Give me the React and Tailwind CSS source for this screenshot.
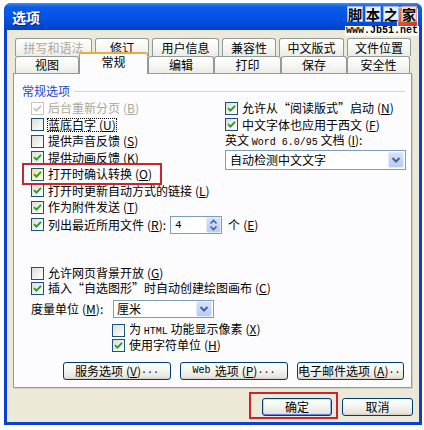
import React from "react";

function Check({ checked, disabled, hover }) {
  const cls = disabled
    ? "border-[#CAC8BB] bg-white"
    : hover
    ? "border-[#1C5180] bg-[linear-gradient(135deg,#EFE39A,#FFFBE2)]"
    : "border-[#1C5180] bg-[linear-gradient(135deg,#DCDCD7,#FFFFFF)]";
  return (
    <span className={"w-[13px] h-[13px] border flex items-center justify-center shrink-0 " + cls}>
      {checked && (
        <svg width="9" height="9" viewBox="0 0 9 9">
          <path d="M1 4.2 L3.4 6.6 L8 1.8" fill="none" stroke={disabled ? "#C8C6B8" : "#21A121"} strokeWidth="1.9" />
        </svg>
      )}
    </span>
  );
}

function K({ k }) {
  return (
    <span className="ml-[3px]">
      (<span className="underline underline-offset-[1px]">{k}</span>)
    </span>
  );
}

function Row({ checked, disabled, hover, className, children }) {
  return (
    <div className={"flex items-center gap-[4px] " + (className || "")}>
      <Check checked={checked} disabled={disabled} hover={hover} />
      <span className={"whitespace-nowrap leading-[14px] " + (disabled ? "text-[#ACA899]" : "")}>{children}</span>
    </div>
  );
}

function DropArrow() {
  return (
    <span className="w-[16px] h-[16px] mr-[1px] rounded-[2px] border border-[#E2EBFE] bg-[linear-gradient(#D4E2FD,#B7CBF6)] flex items-center justify-center shrink-0">
      <svg width="10" height="8" viewBox="0 0 10 8">
        <path d="M1.5 2 L5 5.5 L8.5 2" fill="none" stroke="#4D6185" strokeWidth="2" />
      </svg>
    </span>
  );
}

function Btn({ className, children, def }) {
  return (
    <div
      className={
        "h-[18px] rounded-[3px] border border-[#003C74] bg-[linear-gradient(#FFFFFF,#F4F4F0_45%,#E8E6DD_85%,#D6D0C5)] flex items-center whitespace-nowrap overflow-hidden leading-[14px] " +
        (def ? "shadow-[inset_0_1px_0_#CEE7FF,inset_0_-1px_0_#6982EE,inset_1px_0_0_#B8D2F6,inset_-1px_0_0_#97AEF0] " : "") +
        className
      }
    >
      {children}
    </div>
  );
}

const tab1 =
  "h-[18px] border border-b-0 border-[#919B9C] rounded-t-[3px] bg-[linear-gradient(#FFFFFF,#F5F5F1_60%,#ECEBE6)] flex items-center justify-center leading-[14px]";
const tab2 =
  "h-[17px] border border-b-0 border-[#919B9C] rounded-t-[3px] bg-[linear-gradient(#FFFFFF,#F5F5F1_60%,#ECEBE6)] flex items-center justify-center leading-[14px]";

export default function App() {
  return (
    <div className="w-[424px] h-[430px] bg-white relative overflow-hidden font-['Noto_Sans_CJK_SC',sans-serif] text-[12px] text-black">
      {/* window */}
      <div className="ml-[4px] mt-[3px] w-[418px] h-[422px] flex flex-col rounded-t-[7px] bg-[#0B3FCF]">
        {/* title bar */}
        <div className="h-[27px] rounded-t-[7px] bg-[linear-gradient(#3C8CF6,#0D5DE8_14%,#0454E6_50%,#0148D6_85%,#0040C2)] flex items-center justify-between pl-[8px] pr-[4px]">
          <span className="text-white font-bold text-[14px] leading-[16px] [text-shadow:1px_1px_0_#0F1F7A]">选项</span>
          <div className="w-[21px] h-[21px] rounded-[3px] border border-white bg-[linear-gradient(135deg,#EC8A6A,#D9512F_50%,#C23A1B)] flex items-center justify-center mt-[1px]">
            <svg width="11" height="11" viewBox="0 0 11 11">
              <path d="M1.5 1.5 L9.5 9.5 M9.5 1.5 L1.5 9.5" stroke="white" strokeWidth="2" />
            </svg>
          </div>
        </div>
        {/* body */}
        <div className="flex-1 mx-[3px] mb-[3px] bg-[#ECE9D8] flex flex-col pt-[8px]">
          {/* tabs */}
          <div className="h-[35px] flex flex-col">
            <div className="flex gap-[3px] pl-[8px]">
              <div className={tab1 + " w-[77px] text-[#ACA899]"}>拼写和语法</div>
              <div className={tab1 + " w-[54px]"}>修订</div>
              <div className={tab1 + " w-[67px]"}>用户信息</div>
              <div className={tab1 + " w-[54px]"}>兼容性</div>
              <div className={tab1 + " w-[65px]"}>中文版式</div>
              <div className={tab1 + " w-[64px]"}>文件位置</div>
            </div>
            <div className="flex items-end h-[17px] pl-[8px]">
              <div className={tab2 + " w-[64px]"}>视图</div>
              <div className="relative z-10 w-[69px] h-[22px] -mb-[1px] border border-b-0 border-[#919B9C] border-t-2 border-t-[#F1A93C] rounded-t-[3px] bg-[#FCFCFE] flex items-start justify-center pt-[1px] leading-[14px]">
                常规
              </div>
              <div className={tab2 + " w-[66px]"}>编辑</div>
              <div className={tab2 + " w-[67px]"}>打印</div>
              <div className={tab2 + " w-[66px]"}>保存</div>
              <div className={tab2 + " w-[63px]"}>安全性</div>
            </div>
          </div>

          {/* panel */}
          <div className="ml-[6px] mr-[7px] h-[315px] border border-[#919B9C] bg-[#FCFCFE] shadow-[1px_1px_0_#D2D0C2] flex flex-col pt-[10px]">
            <div className="flex items-center h-[14px] pl-[8px]">
              <span className="text-[#1E48D0] leading-[14px]">常规选项</span>
              <div className="flex-1 h-px bg-[#D5D5C8] ml-[4px] mr-[6px]" />
            </div>

            <div className="flex mt-[2px]">
              <div className="w-[211px] pl-[17px] flex flex-col">
                <Row checked disabled className="h-[16.5px]">
                  后台重新分页<K k="B" />
                </Row>
                <div className="flex items-center gap-[4px] h-[16.5px]">
                  <Check />
                  <span className="whitespace-nowrap leading-[12px] outline-1 outline-dotted outline-black outline-offset-[-1px] px-[1px] py-[1px] -ml-[1px]">
                    蓝底白字<K k="U" />
                  </span>
                </div>
                <Row className="h-[16.5px]">
                  提供声音反馈<K k="S" />
                </Row>
                <Row checked className="h-[16.5px]">
                  提供动画反馈<K k="K" />
                </Row>
                <div className="relative h-[16.5px] flex items-center">
                  <Row checked hover className="h-[16.5px]">
                    打开时确认转换<K k="O" />
                  </Row>
                  <div className="absolute -left-[9px] -top-[3px] w-[140px] h-[22px] border-2 border-[#C8262C]" />
                </div>
                <Row checked className="h-[16.5px]">
                  打开时更新自动方式的链接<K k="L" />
                </Row>
                <Row checked className="h-[16.5px]">
                  作为附件发送<K k="T" />
                </Row>
              </div>
              <div className="flex flex-col">
                <Row checked className="h-[16.5px]">
                  允许从“阅读版式”启动<K k="N" />
                </Row>
                <Row checked className="h-[16.5px]">
                  中文字体也应用于西文<K k="F" />
                </Row>
                <div className="h-[14px] leading-[14px] whitespace-nowrap">
                  英文 <span className="font-['Liberation_Mono',monospace] text-[10px]">Word 6.0/95</span> 文档<K k="I" />:
                </div>
                <div className="mt-[3px] w-[181px] h-[20px] border border-[#7F9DB9] bg-white flex items-center justify-between">
                  <span className="pl-[4px] leading-[14px]">自动检测中文文字</span>
                  <DropArrow />
                </div>
              </div>
            </div>

            <div className="flex items-center h-[18px] pl-[17px]">
              <Check checked />
              <span className="ml-[4px] whitespace-nowrap leading-[14px]">
                列出最近所用文件<K k="R" />:
              </span>
              <div className="ml-[4px] w-[52px] h-[18px] border border-[#7F9DB9] bg-white flex items-center">
                <span className="flex-1 pl-[4px] font-['Liberation_Mono',monospace] text-[11px] leading-[14px]">4</span>
                <span className="w-[15px] h-[16px] rounded-[2px] border border-[#E2EBFE] bg-[linear-gradient(#D4E2FD,#B7CBF6)] flex items-center justify-center">
                  <svg width="9" height="12" viewBox="0 0 9 12">
                    <path d="M1.5 4.5 L4.5 1.5 L7.5 4.5 M1.5 7.5 L4.5 10.5 L7.5 7.5" fill="none" stroke="#4D6185" strokeWidth="1.6" />
                  </svg>
                </span>
              </div>
              <span className="ml-[6px] whitespace-nowrap leading-[14px]">
                个<K k="E" />
              </span>
            </div>

            <Row className="h-[15px] pl-[17px] mt-[32px]">
              允许网页背景开放<K k="G" />
            </Row>
            <Row checked className="h-[15px] pl-[17px]">
              插入“自选图形”时自动创建绘图画布<K k="C" />
            </Row>
            <div className="flex items-center h-[18px] pl-[17px] mt-[4.5px]">
              <span className="w-[82px] whitespace-nowrap leading-[14px]">
                度量单位<K k="M" />:
              </span>
              <div className="w-[101px] h-[18px] border border-[#7F9DB9] bg-white flex items-center justify-between">
                <span className="pl-[3px] leading-[14px]">厘米</span>
                <DropArrow />
              </div>
            </div>
            <Row className="h-[15px] pl-[98px] mt-[4.5px]">
              为 <span className="font-['Liberation_Mono',monospace] text-[10px]">HTML</span> 功能显示像素<K k="X" />
            </Row>
            <Row checked className="h-[15px] pl-[98px]">
              使用字符单位<K k="H" />
            </Row>

            <div className="flex gap-[9px] pl-[49px] mt-[9.5px]">
              <Btn className="w-[108px] justify-center">
                服务选项<K k="V" />
                <span className="font-['Liberation_Mono',monospace] text-[10px]">...</span>
              </Btn>
              <Btn className="w-[108px] justify-center">
                <span className="font-['Liberation_Mono',monospace] text-[10px]">Web</span>
                <span className="ml-[4px]">选项</span>
                <K k="P" />
                <span className="font-['Liberation_Mono',monospace] text-[10px]">...</span>
              </Btn>
              <Btn className="w-[107px] justify-start">
                <span>电子邮件选项</span>
                <K k="A" />
                <span className="font-['Liberation_Mono',monospace] text-[10px]">...</span>
              </Btn>
            </div>
          </div>

          {/* bottom buttons */}
          <div className="flex justify-end gap-[10px] pr-[6px] mt-[10px]">
            <div className="relative">
              <Btn def className="w-[70px] justify-center">确定</Btn>
              <div className="absolute -left-[13px] -top-[6px] w-[89px] h-[27px] border-2 border-[#C8262C]" />
            </div>
            <Btn className="w-[71px] justify-center">取消</Btn>
          </div>
        </div>
      </div>

      {/* watermark */}
      <div className="absolute left-[345px] top-[6px] flex flex-col">
        <div className="flex gap-[2px] pl-[2px]">
          <span className="w-[16px] h-[16px] bg-white/90 border border-[#9FB7E6] flex items-center justify-center text-[14px] leading-[14px] font-bold">脚</span>
          <span className="w-[16px] h-[16px] bg-white/90 border border-[#9FB7E6] flex items-center justify-center text-[14px] leading-[14px] font-bold">本</span>
          <span className="w-[16px] h-[16px] bg-white/90 border border-[#9FB7E6] flex items-center justify-center text-[14px] leading-[14px] font-bold">之</span>
          <span className="w-[16px] h-[16px] bg-[#F8DCD2]/95 border border-[#E0A090] flex items-center justify-center text-[14px] leading-[14px] font-bold">家</span>
        </div>
        <div className="mt-[4px] bg-white px-[1px] font-['Liberation_Mono',monospace] font-bold text-[10px] leading-[10px] whitespace-nowrap">
          www.Jb51.net
        </div>
      </div>
    </div>
  );
}
